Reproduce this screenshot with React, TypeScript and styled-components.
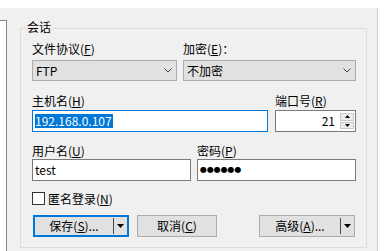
import React from "react";
import styled, { createGlobalStyle } from "styled-components";

const GlobalStyle = createGlobalStyle`
  html, body {
    margin: 0;
    padding: 0;
    background: #ffffff;
  }
  body {
    font-family: "Noto Sans CJK SC", "Liberation Sans", sans-serif;
    font-size: 12px;
    color: #000000;
  }
`;

function Chevron() {
    return <svg width="8" height="5" viewBox="0 0 8 5">
        <polyline points="0.5,0.5 4,4 7.5,0.5" fill="none" stroke="#404040" strokeWidth="1"/>
    </svg>;
}

function DropArrow() {
    return <svg width="7" height="4" viewBox="0 0 7 4">
        <polygon points="0,0 7,0 3.5,4" fill="#000000"/>
    </svg>;
}

function SpinArrow({ up }: { up?: boolean }) {
    return <svg width="5" height="3" viewBox="0 0 5 3">
        <polygon points={up ? "0,3 5,3 2.5,0" : "0,0 5,0 2.5,3"} fill="#000000"/>
    </svg>;
}

export default function App() {
    return <>
        <GlobalStyle/>
        <Window>
            <TopBand/>
            <Body>
                <LeftPane>
                    <ListEdge/>
                </LeftPane>
                <Main>
                    <Group>
                        <Legend>会话</Legend>

                        <Row $cols="145px 173px" $gap={6} $top={8}>
                            <Field $gap={4}>
                                <Label>文件协议(<Key>F</Key>)</Label>
                                <Combo>
                                    <ComboText>FTP</ComboText>
                                    <Chevron/>
                                </Combo>
                            </Field>
                            <Field $gap={4}>
                                <Label>加密(<Key>E</Key>)：</Label>
                                <Combo>
                                    <ComboText>不加密</ComboText>
                                    <Chevron/>
                                </Combo>
                            </Field>
                        </Row>

                        <Row $cols="236px 81px" $gap={7} $top={13}>
                            <Field $gap={2}>
                                <Label>主机名(<Key>H</Key>)</Label>
                                <TextBox $focused>
                                    <Selected>192.168.0.107</Selected>
                                </TextBox>
                            </Field>
                            <Field $gap={2}>
                                <Label>端口号(<Key>R</Key>)</Label>
                                <TextBox>
                                    <PortValue>21</PortValue>
                                    <Spinner>
                                        <SpinButton><SpinArrow up/></SpinButton>
                                        <SpinButton><SpinArrow/></SpinButton>
                                    </Spinner>
                                </TextBox>
                            </Field>
                        </Row>

                        <Row $cols="159px 159px" $gap={6} $top={12}>
                            <Field $gap={1}>
                                <Label>用户名(<Key>U</Key>)</Label>
                                <TextBox>
                                    <Value>test</Value>
                                </TextBox>
                            </Field>
                            <Field $gap={1}>
                                <Label>密码(<Key>P</Key>)</Label>
                                <TextBox>
                                    <Dots>●●●●●●</Dots>
                                </TextBox>
                            </Field>
                        </Row>

                        <CheckRow>
                            <CheckBox/>
                            <span>匿名登录(<Key>N</Key>)</span>
                        </CheckRow>

                        <ButtonRow>
                            <Button $width={96} $default>
                                <ButtonLabel>保存(<Key>S</Key>)...</ButtonLabel>
                                <SplitLine/>
                                <SplitArrow><DropArrow/></SplitArrow>
                            </Button>
                            <Button $width={80}>
                                <ButtonLabel>取消(<Key>C</Key>)</ButtonLabel>
                            </Button>
                            <Spacer/>
                            <Button $width={96}>
                                <ButtonLabel>高级(<Key>A</Key>)...</ButtonLabel>
                                <SplitLine/>
                                <SplitArrow><DropArrow/></SplitArrow>
                            </Button>
                        </ButtonRow>
                    </Group>
                </Main>
                <RightPane/>
            </Body>
        </Window>
    </>;
}

const Window = styled.div`
  width: 385px;
  height: 251px;
  display: flex;
  flex-direction: column;
  background: #ffffff;
  overflow: hidden;
`;
const TopBand = styled.div`
  height: 8px;
  flex: none;
  background: #ffffff;
`;
const Body = styled.div`
  flex: 1;
  display: flex;
  min-height: 0;
`;
const LeftPane = styled.div`
  width: 7px;
  flex: none;
  display: flex;
  padding-top: 12px;
  box-sizing: border-box;
  background: #f0f0f0;
`;
const ListEdge = styled.div`
  flex: 1;
  background: #ffffff;
  border-top: 1px solid #828790;
  border-right: 1px solid #828790;
`;
const Main = styled.div`
  width: 370px;
  flex: none;
  box-sizing: border-box;
  padding: 20px 10px 3px 13px;
  background: #f0f0f0;
`;
const RightPane = styled.div`
  flex: 1;
  background: #ffffff;
  border-left: 1px solid #cbd1c2;
`;
const Group = styled.div`
  border: 1px solid #dcdcdc;
  padding: 0 10px 10px 11px;
`;
const Legend = styled.div`
  width: fit-content;
  margin: -9px 0 0 -6px;
  padding: 0 1px;
  line-height: 14px;
  height: 14px;
  background: #f0f0f0;
`;
const Row = styled.div<{ $cols: string; $gap: number; $top: number }>`
  display: grid;
  grid-template-columns: ${p => p.$cols};
  column-gap: ${p => p.$gap}px;
  margin-top: ${p => p.$top}px;
`;
const Field = styled.div<{ $gap: number }>`
  display: flex;
  flex-direction: column;
  gap: ${p => p.$gap}px;
  min-width: 0;
`;
const Label = styled.div`
  height: 14px;
  line-height: 14px;
  white-space: nowrap;
`;
const Key = styled.span`
  text-decoration: underline;
  text-underline-offset: 1px;
`;
const Combo = styled.div`
  height: 21px;
  box-sizing: border-box;
  display: flex;
  align-items: center;
  padding: 0 4px 0 3px;
  border: 1px solid #adadad;
  background: #e1e1e1;
`;
const ComboText = styled.span`
  flex: 1;
  line-height: 14px;
`;
const TextBox = styled.div<{ $focused?: boolean }>`
  height: 22px;
  box-sizing: border-box;
  display: flex;
  align-items: center;
  padding: 0 1px 0 2px;
  border: 1px solid ${p => (p.$focused ? "#0078d7" : "#7a7a7a")};
  background: #ffffff;
`;
const Value = styled.span`
  line-height: 14px;
`;
const Selected = styled.span`
  line-height: 14px;
  padding: 0 1px 0 0;
  background: #0078d7;
  color: #ffffff;
`;
const PortValue = styled.span`
  flex: 1;
  text-align: right;
  line-height: 14px;
`;
const Dots = styled.span`
  font-family: "DejaVu Sans", sans-serif;
  font-size: 8px;
  letter-spacing: -0.1px;
  line-height: 14px;
`;
const Spinner = styled.div`
  width: 14px;
  height: 16px;
  margin-left: 5px;
  display: flex;
  flex-direction: column;
  gap: 1px;
`;
const SpinButton = styled.div`
  flex: 1;
  display: flex;
  align-items: center;
  justify-content: center;
  box-sizing: border-box;
  border: 1px solid #c8c8c8;
  background: #ececec;
`;
const CheckRow = styled.div`
  display: flex;
  align-items: center;
  gap: 3px;
  height: 13px;
  margin-top: 11px;
  line-height: 14px;
`;
const CheckBox = styled.span`
  width: 13px;
  height: 13px;
  box-sizing: border-box;
  border: 1px solid #333333;
  background: #ffffff;
`;
const ButtonRow = styled.div`
  display: flex;
  height: 22px;
  margin-top: 10px;
  padding: 0 1px;
  gap: 8px;
`;
const Spacer = styled.div`
  flex: 1;
`;
const Button = styled.div<{ $width: number; $default?: boolean }>`
  width: ${p => p.$width}px;
  box-sizing: border-box;
  display: flex;
  align-items: center;
  border: ${p => (p.$default ? "2px solid #0078d7" : "1px solid #adadad")};
  background: #e1e1e1;
  line-height: 14px;
`;
const ButtonLabel = styled.span`
  flex: 1;
  text-align: center;
  white-space: nowrap;
`;
const SplitLine = styled.span`
  width: 1px;
  height: 16px;
  background: #4a4a4a;
`;
const SplitArrow = styled.span`
  width: 13px;
  display: flex;
  justify-content: center;
  align-items: center;
`;
